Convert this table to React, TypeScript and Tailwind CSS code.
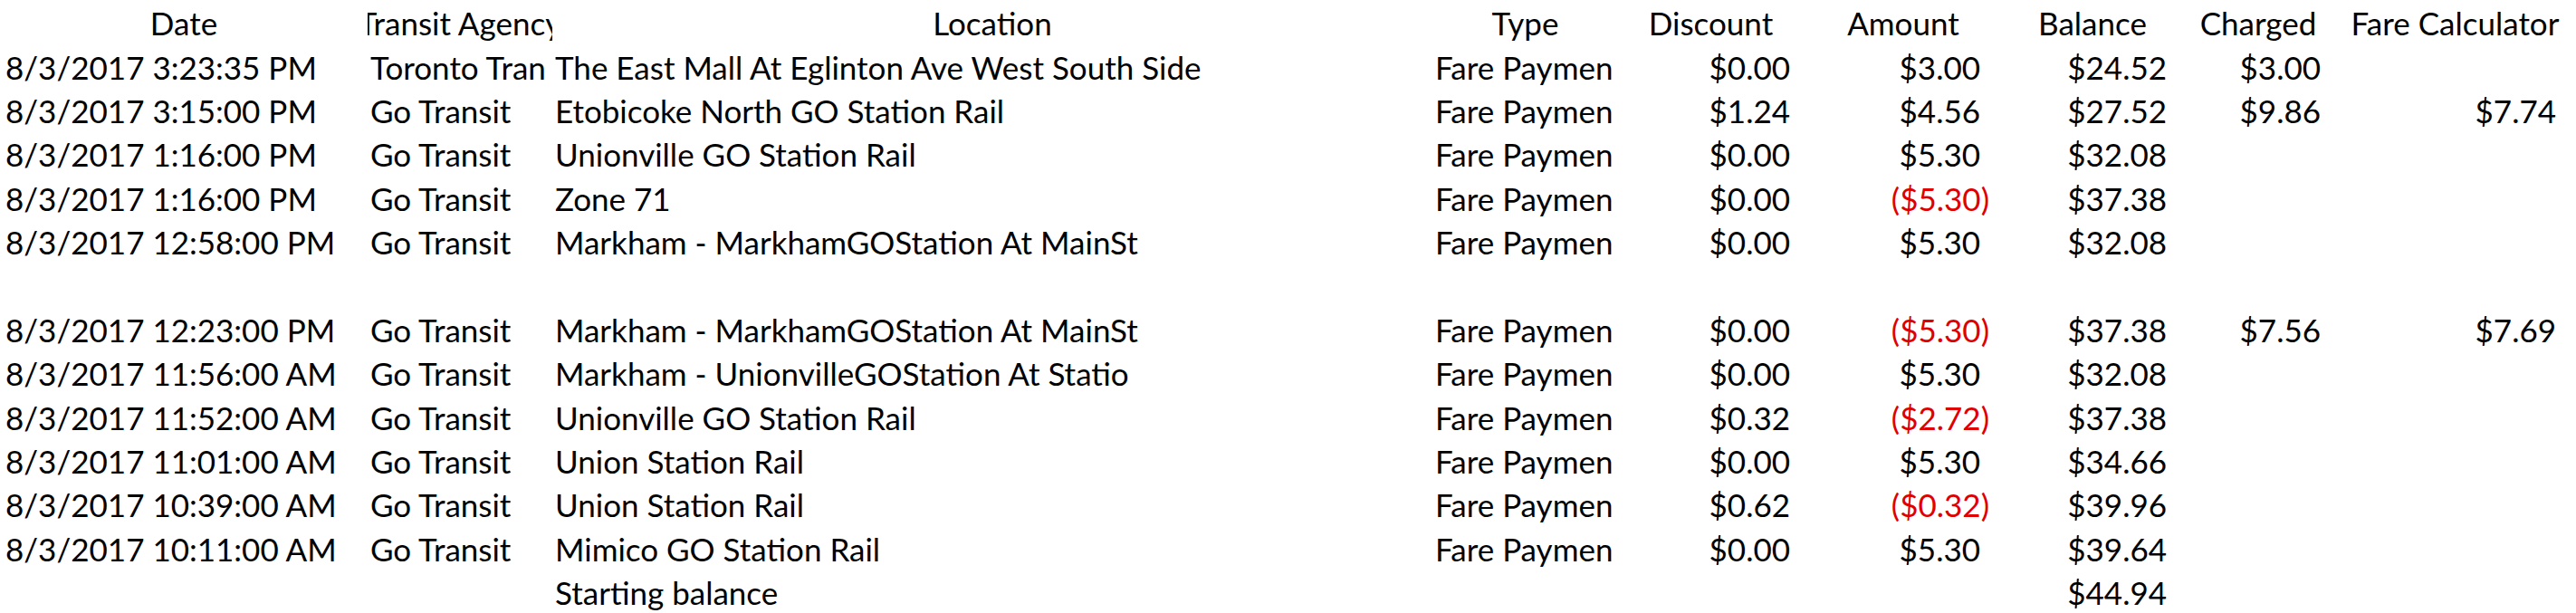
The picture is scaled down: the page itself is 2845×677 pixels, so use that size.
type Row = {
    date?: string
    agency?: string
    location?: string
    type?: string
    discount?: string
    amount?: string
    negative?: boolean
    balance?: string
    charged?: string
    fare?: string
}

const rows: Row[] = [
    { date: '8/3/2017 3:23:35 PM', agency: 'Toronto Tran', location: 'The East Mall At Eglinton Ave West South Side', type: 'Fare Paymen', discount: '$0.00', amount: '$3.00', balance: '$24.52', charged: '$3.00' },
    { date: '8/3/2017 3:15:00 PM', agency: 'Go Transit', location: 'Etobicoke North GO Station Rail', type: 'Fare Paymen', discount: '$1.24', amount: '$4.56', balance: '$27.52', charged: '$9.86', fare: '$7.74' },
    { date: '8/3/2017 1:16:00 PM', agency: 'Go Transit', location: 'Unionville GO Station Rail', type: 'Fare Paymen', discount: '$0.00', amount: '$5.30', balance: '$32.08' },
    { date: '8/3/2017 1:16:00 PM', agency: 'Go Transit', location: 'Zone 71', type: 'Fare Paymen', discount: '$0.00', amount: '($5.30)', negative: true, balance: '$37.38' },
    { date: '8/3/2017 12:58:00 PM', agency: 'Go Transit', location: 'Markham - MarkhamGOStation At MainSt', type: 'Fare Paymen', discount: '$0.00', amount: '$5.30', balance: '$32.08' },
    {},
    { date: '8/3/2017 12:23:00 PM', agency: 'Go Transit', location: 'Markham - MarkhamGOStation At MainSt', type: 'Fare Paymen', discount: '$0.00', amount: '($5.30)', negative: true, balance: '$37.38', charged: '$7.56', fare: '$7.69' },
    { date: '8/3/2017 11:56:00 AM', agency: 'Go Transit', location: 'Markham - UnionvilleGOStation At Statio', type: 'Fare Paymen', discount: '$0.00', amount: '$5.30', balance: '$32.08' },
    { date: '8/3/2017 11:52:00 AM', agency: 'Go Transit', location: 'Unionville GO Station Rail', type: 'Fare Paymen', discount: '$0.32', amount: '($2.72)', negative: true, balance: '$37.38' },
    { date: '8/3/2017 11:01:00 AM', agency: 'Go Transit', location: 'Union Station Rail', type: 'Fare Paymen', discount: '$0.00', amount: '$5.30', balance: '$34.66' },
    { date: '8/3/2017 10:39:00 AM', agency: 'Go Transit', location: 'Union Station Rail', type: 'Fare Paymen', discount: '$0.62', amount: '($0.32)', negative: true, balance: '$39.96' },
    { date: '8/3/2017 10:11:00 AM', agency: 'Go Transit', location: 'Mimico GO Station Rail', type: 'Fare Paymen', discount: '$0.00', amount: '$5.30', balance: '$39.64' },
    { location: 'Starting balance', balance: '$44.94' },
]

// column widths follow the sheet: date, agency, location, type, discount, amount, balance, charged, fare calc
const grid = 'grid h-[48.36px] grid-cols-[406px_204px_972px_205px_205px_220px_198px_168px_267px] items-end'
const cell = 'overflow-hidden whitespace-nowrap leading-[42px] pb-[2px]'
const head = 'flex justify-center overflow-hidden whitespace-nowrap leading-[42px] pb-[2px]'

export default function App() {
    return (
        <div className="h-[677px] w-[2845px] overflow-hidden bg-white text-[35px] text-black [font-family:Lato,'Noto_Sans',sans-serif]">
            <div className={grid}>
                <div className={head}>Date</div>
                <div className={head}>Transit Agency</div>
                <div className={head}>Location</div>
                <div className={head}>Type</div>
                <div className={head}>Discount</div>
                <div className={head}>Amount</div>
                <div className={head}>Balance</div>
                <div className={head}>Charged</div>
                <div className={head}>Fare Calculator</div>
            </div>
            {rows.map((r, i) => (
                <div key={i} className={grid}>
                    <div className={`${cell} pl-[6px]`}>{r.date}</div>
                    <div className={`${cell} pl-[3px]`}>{r.agency}</div>
                    <div className={`${cell} pl-[3px]`}>{r.location}</div>
                    <div className={`${cell} pl-[3px]`}>{r.type}</div>
                    <div className={`${cell} pr-[15px] text-right`}>{r.discount}</div>
                    <div className={`${cell} text-right ${r.negative ? 'pr-[15px] text-[#e00000]' : 'pr-[25px]'}`}>{r.amount}</div>
                    <div className={`${cell} pr-[17px] text-right`}>{r.balance}</div>
                    <div className={`${cell} pr-[15px] text-right`}>{r.charged}</div>
                    <div className={`${cell} pr-[22px] text-right`}>{r.fare}</div>
                </div>
            ))}
        </div>
    )
}
